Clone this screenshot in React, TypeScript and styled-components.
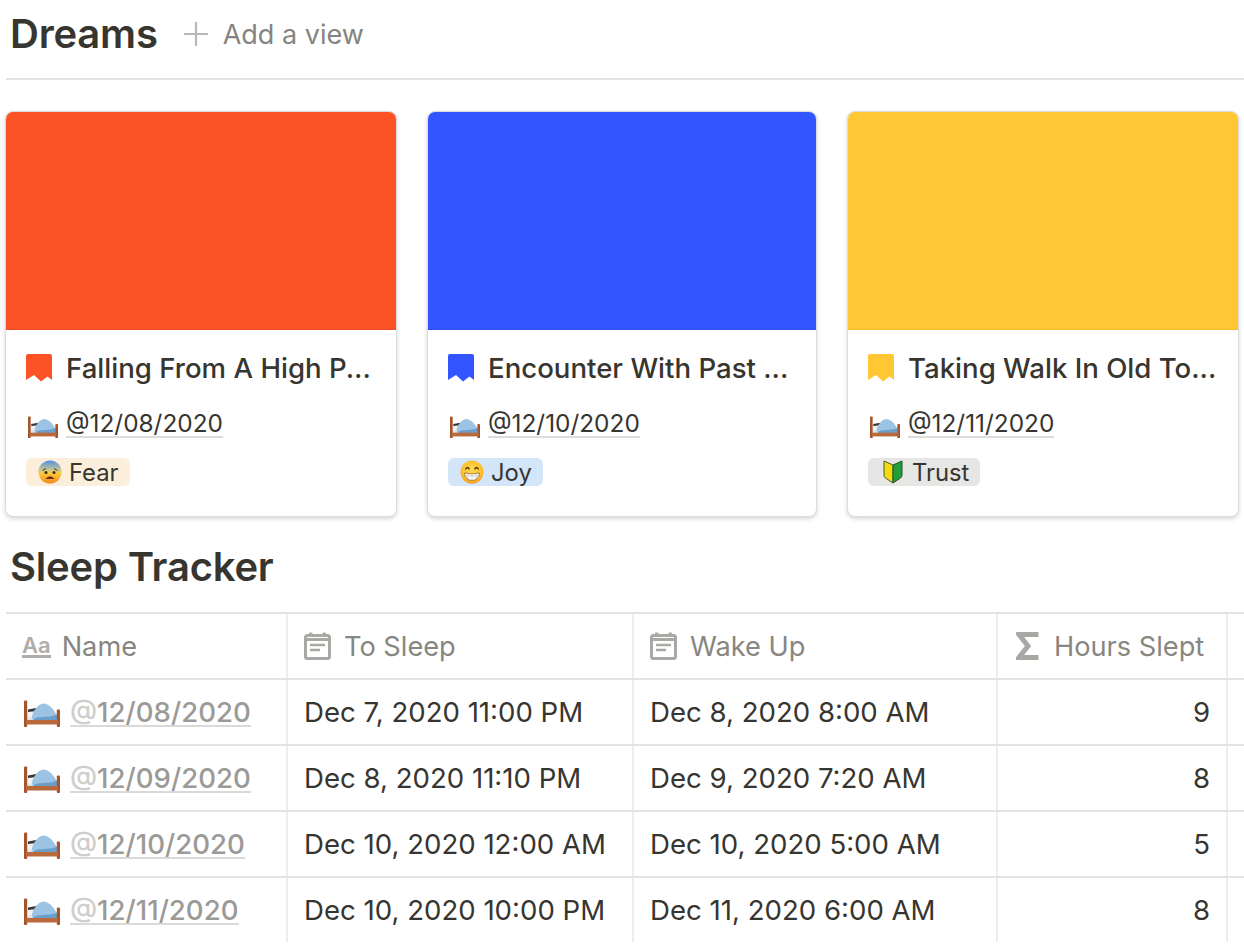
import React from 'react'
import styled, { createGlobalStyle } from 'styled-components'

const GlobalStyle = createGlobalStyle`
  html, body {
    margin: 0;
    height: 100%;
    overflow: hidden;
    background: #fff;
  }
  body {
    font-family: Inter, "Noto Sans", "Liberation Sans", sans-serif;
    color: #37352f;
    -webkit-font-smoothing: antialiased;
  }
`

const Page = styled.div`
  width: 1244px;
  height: 944px;
  overflow: hidden;
`

const ViewBar = styled.div`
  display: flex;
  align-items: center;
  height: 80px;
  margin-left: 6px;
  padding: 0 0 10px 4px;
  box-sizing: border-box;
  border-bottom: 2px solid #e3e2e0;
`

const SectionTitle = styled.h2`
  margin: 0;
  font-size: 40px;
  line-height: 46px;
  font-weight: 600;
  letter-spacing: -0.2px;
  color: #37352f;
`

const AddView = styled.div`
  display: flex;
  align-items: center;
  gap: 15px;
  margin-left: 26px;
  font-size: 27px;
  color: #858480;
`

const Cards = styled.div`
  display: grid;
  grid-template-columns: 392px 390px 392px;
  gap: 30px;
  margin: 31px 0 0 5px;
`

const Card = styled.div`
  height: 406px;
  box-sizing: border-box;
  border: 1px solid #dcdcdb;
  border-radius: 8px;
  overflow: hidden;
  background: #fff;
  box-shadow: 0 2px 4px rgba(15, 15, 15, 0.16);
`

const Cover = styled.div<{ $color: string }>`
  height: 218px;
  background: ${p => p.$color};
  box-shadow: inset 0 -1px 0 rgba(0, 0, 0, 0.05);
`

const CardBody = styled.div`
  display: flex;
  flex-direction: column;
  align-items: flex-start;
  padding: 22px 20px 0 20px;
`

const CardTitle = styled.div`
  display: flex;
  align-items: center;
  gap: 14px;
  height: 32px;
  font-size: 27.6px;
  font-weight: 500;
  white-space: nowrap;
`

const DateRow = styled.div`
  display: flex;
  align-items: flex-end;
  gap: 8px;
  height: 30px;
  margin: 24px 0 0 2px;
`

const Mention = styled.span<{ $muted?: boolean; $size: number }>`
  font-size: ${p => p.$size}px;
  line-height: ${p => (p.$muted ? 26 : 25)}px;
  border-bottom: 2px solid ${p => (p.$muted ? '#d9d9d7' : '#dcdcda')};
  color: ${p => (p.$muted ? '#9b9a97' : '#37352f')};
  font-weight: ${p => (p.$muted ? 500 : 400)};
`

const At = styled.span`
  color: #cfcecc;
`

const Tag = styled.div<{ $bg: string }>`
  display: flex;
  align-items: center;
  gap: 7px;
  height: 28px;
  margin-top: 20px;
  padding: 0 11px 0 12px;
  border-radius: 6px;
  background: ${p => p.$bg};
  font-size: 23.8px;
`

const Table = styled.div`
  margin-left: 6px;
  border-top: 2px solid #e3e2e0;
`

const Row = styled.div`
  display: grid;
  grid-template-columns: 282px 346px 364px 230px 1fr;
  height: 66px;
  box-sizing: border-box;
  border-bottom: 2px solid #e3e2e0;
  &:last-child {
    border-bottom-color: transparent;
  }
`

const Cell = styled.div<{ $right?: boolean }>`
  display: flex;
  align-items: center;
  justify-content: ${p => (p.$right ? 'flex-end' : 'flex-start')};
  padding: 0 16px;
  border-right: 2px solid #ededec;
  font-size: 27.6px;
  white-space: nowrap;
  &:last-child {
    border-right: none;
  }
`

const NameCell = styled(Cell)`
  align-items: flex-end;
  gap: 10px;
  padding: 0 0 17px 18px;
`

const HeadCell = styled(Cell)<{ $gap?: number }>`
  gap: ${p => p.$gap ?? 13}px;
  color: #878681;
  font-size: 27.2px;
`

const TypeGlyph = styled.span`
  font-size: 22px;
  font-weight: 600;
  line-height: 20px;
  color: #aeadaa;
  border-bottom: 3px solid #aeadaa;
`

const SigmaWrap = styled.span`
  display: flex;
  margin-left: 2px;
`

const Plus = () => (
  <svg width="24" height="24" viewBox="0 0 24 24">
    <path d="M12 0v24M0 12h24" stroke="#b9b8b5" strokeWidth="2.2" />
  </svg>
)

const CalendarIcon = () => (
  <svg width="27" height="28" viewBox="0 0 27 28">
    <rect x="1.5" y="3.5" width="24" height="23" rx="2" fill="none" stroke="#a9a8a5" strokeWidth="3" />
    <path d="M1 6h25v3H1z" fill="#a9a8a5" />
    <rect x="5" y="0.5" width="3.5" height="4" rx="1" fill="#a9a8a5" />
    <rect x="18.5" y="0.5" width="3.5" height="4" rx="1" fill="#a9a8a5" />
    <path d="M6 13h15M6 18h10" stroke="#a9a8a5" strokeWidth="2.4" />
  </svg>
)

const SigmaIcon = () => (
  <svg width="23" height="28" viewBox="0 0 23 28">
    <path d="M22.5 2.5H3L12 14 3 25.5H22.5" fill="none" stroke="#a9a8a5" strokeWidth="5" />
  </svg>
)

const Bookmark = ({ color }: { color: string }) => (
  <svg width="26" height="28" viewBox="0 0 26 28">
    <path d="M0 2Q0 0 2 0H24Q26 0 26 2V26L21.5 22.5 15 27.5 8 21 0 26Z" fill={color} />
  </svg>
)

const Bed = ({ width = 30 }: { width?: number }) => (
  <svg width={width} height={width * 0.75} viewBox="0 0 36 27">
    <rect x="3" y="15" width="30" height="6" fill="#dfe3e6" />
    <path d="M3 10.5 11 9l2 5.5-2 3H3z" fill="#f1f1ef" />
    <path d="M4 9.5 12 8l1 3-9 1z" fill="#38383b" />
    <path d="M8 16C10 9 15 3.5 20 3.5 26 4.5 30 10 33 15.500V20.500H11C8.500 20.500 7.500 18 8 16Z" fill="#9cc3e3" />
    <path d="M9 19.500C14 15.500 24 18.500 33 14.500V20.500H12Z" fill="#6a9ecb" />
    <rect x="0" y="0.5" width="3.2" height="26.5" rx="1" fill="#a4552c" />
    <rect x="32.800" y="9.500" width="3.200" height="17.500" rx="1" fill="#a4552c" />
    <rect x="2" y="20" width="32" height="4.500" fill="#b9693b" />
  </svg>
)

const Fearful = () => (
  <svg width="24" height="24" viewBox="0 0 24 24">
    <defs>
      <linearGradient id="fear" x1="0" y1="0" x2="0" y2="1">
        <stop offset="0" stopColor="#4f8fe6" />
        <stop offset=".42" stopColor="#c9c98e" />
        <stop offset=".55" stopColor="#fbc93e" />
        <stop offset="1" stopColor="#f4891a" />
      </linearGradient>
    </defs>
    <circle cx="12" cy="12" r="11.5" fill="url(#fear)" />
    <circle cx="8" cy="12.5" r="1.5" fill="#3b2a1c" />
    <circle cx="16" cy="12.5" r="1.5" fill="#3b2a1c" />
    <path d="M4.5 10.5 8 8.5M19.5 10.5 16 8.5" stroke="#4a3320" strokeWidth="1" fill="none" />
    <path d="M7.5 19Q12 13.5 16.5 19Z" fill="#6b2d14" />
  </svg>
)

const Grin = () => (
  <svg width="24" height="24" viewBox="0 0 24 24">
    <defs>
      <radialGradient id="grin" cx=".5" cy=".4" r=".65">
        <stop offset="0" stopColor="#fedc4f" />
        <stop offset=".7" stopColor="#fdbd2c" />
        <stop offset="1" stopColor="#f28c14" />
      </radialGradient>
    </defs>
    <circle cx="12" cy="12" r="11.5" fill="url(#grin)" />
    <path d="M5.5 9.5Q7.5 5.5 9.5 9.5M14.5 9.5Q16.5 5.5 18.5 9.5" stroke="#5b3a16" strokeWidth="1.3" fill="none" />
    <path d="M4.5 13Q12 15 19.5 13 19 20 12 20.5 5 20 4.5 13Z" fill="#fff" stroke="#8a5a20" strokeWidth=".7" />
    <path d="M4.8 16H19.2M8 14v6M12 14.5v6M16 14v6" stroke="#b9b3a8" strokeWidth=".6" />
  </svg>
)

const Beginner = () => (
  <svg width="25" height="24" viewBox="0 0 25 24">
    <path d="M4 1 13 5V23L5.5 18Q4 17 4 15Z" fill="#f3dc0c" stroke="#4d5a2a" strokeWidth="1" />
    <path d="M22 1 13 5V23L20.5 18Q22 17 22 15Z" fill="#1f9e3a" stroke="#24512a" strokeWidth="1" />
  </svg>
)

const dreams = [
  { color: '#fb5226', title: 'Falling From A High P...', date: '@12/08/2020', tag: 'Fear', tagBg: '#fbeeda', icon: <Fearful /> },
  { color: '#3355ff', title: 'Encounter With Past ...', date: '@12/10/2020', tag: 'Joy', tagBg: '#d3e5f8', icon: <Grin /> },
  { color: '#ffc733', title: 'Taking Walk In Old To...', date: '@12/11/2020', tag: 'Trust', tagBg: '#e6e6e4', icon: <Beginner /> },
]

const sleep = [
  { name: '12/08/2020', from: 'Dec 7, 2020 11:00 PM', to: 'Dec 8, 2020 8:00 AM', hours: 9 },
  { name: '12/09/2020', from: 'Dec 8, 2020 11:10 PM', to: 'Dec 9, 2020 7:20 AM', hours: 8 },
  { name: '12/10/2020', from: 'Dec 10, 2020 12:00 AM', to: 'Dec 10, 2020 5:00 AM', hours: 5 },
  { name: '12/11/2020', from: 'Dec 10, 2020 10:00 PM', to: 'Dec 11, 2020 6:00 AM', hours: 8 },
]

const TrackerHead = styled.div`
  display: flex;
  align-items: center;
  height: 95px;
  box-sizing: border-box;
  padding: 5px 0 0 10px;
`

const App = () => (
  <Page>
    <GlobalStyle />
    <ViewBar>
      <SectionTitle>Dreams</SectionTitle>
      <AddView>
        <Plus />
        <span>Add a view</span>
      </AddView>
    </ViewBar>

    <Cards>
      {dreams.map(d => (
        <Card key={d.date}>
          <Cover $color={d.color} />
          <CardBody>
            <CardTitle>
              <Bookmark color={d.color} />
              {d.title}
            </CardTitle>
            <DateRow>
              <Bed />
              <Mention $size={24.4}>{d.date}</Mention>
            </DateRow>
            <Tag $bg={d.tagBg}>
              {d.icon}
              {d.tag}
            </Tag>
          </CardBody>
        </Card>
      ))}
    </Cards>

    <TrackerHead>
      <SectionTitle>Sleep Tracker</SectionTitle>
    </TrackerHead>

    <Table>
      <Row>
        <HeadCell $gap={11}>
          <TypeGlyph>Aa</TypeGlyph>
          Name
        </HeadCell>
        <HeadCell>
          <CalendarIcon />
          To Sleep
        </HeadCell>
        <HeadCell>
          <CalendarIcon />
          Wake Up
        </HeadCell>
        <HeadCell $gap={15}>
          <SigmaWrap>
            <SigmaIcon />
          </SigmaWrap>
          Hours Slept
        </HeadCell>
        <Cell />
      </Row>
      {sleep.map(s => (
        <Row key={s.name}>
          <NameCell>
            <Bed width={36} />
            <Mention $muted $size={27.6}>
              <At>@</At>
              {s.name}
            </Mention>
          </NameCell>
          <Cell>{s.from}</Cell>
          <Cell>{s.to}</Cell>
          <Cell $right>{s.hours}</Cell>
          <Cell />
        </Row>
      ))}
    </Table>
  </Page>
)

export default App
